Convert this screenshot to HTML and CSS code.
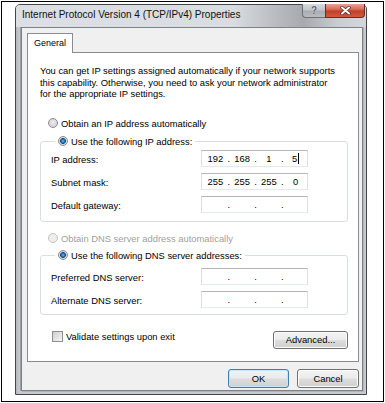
FILE: index.html
```html
<!DOCTYPE html>
<html>
<head>
<meta charset="utf-8">
<link rel="stylesheet" href="styles.css">
</head>
<body>
<div class="frame">
  <div class="window">
    <div class="titlebar">
      <span class="title">Internet Protocol Version 4 (TCP/IPv4) Properties</span>
      <div class="caption">
        <div class="cbtn help">?</div>
        <div class="cbtn close">
          <svg width="11" height="9" viewBox="0 0 11 9"><path d="M2 1.5 L9 7.5 M9 1.5 L2 7.5" stroke="#5a2a22" stroke-width="3.4" stroke-linecap="round"/><path d="M2 1.5 L9 7.5 M9 1.5 L2 7.5" stroke="#ffffff" stroke-width="2" stroke-linecap="round"/></svg>
        </div>
      </div>
    </div>
    <div class="client">
      <div class="tabs"><div class="tab">General</div></div>
      <div class="panel">
        <p class="intro">You can get IP settings assigned automatically if your network supports<br>this capability. Otherwise, you need to ask your network administrator<br>for the appropriate IP settings.</p>

        <div class="radio-row first"><span class="radio"></span><span class="rtext">Obtain an IP address automatically</span></div>

        <fieldset class="group g1">
          <legend><span class="leg"><span class="radio checked"></span><span class="rtext">Use the following IP address:</span></span></legend>
          <div class="field-row r1"><span class="lbl">IP address:</span>
            <div class="ip"><span class="oct">192</span><span class="dot">.</span><span class="oct">168</span><span class="dot">.</span><span class="oct">1</span><span class="dot">.</span><span class="oct">5<span class="caret"></span></span></div>
          </div>
          <div class="field-row"><span class="lbl">Subnet mask:</span>
            <div class="ip"><span class="oct">255</span><span class="dot">.</span><span class="oct">255</span><span class="dot">.</span><span class="oct">255</span><span class="dot">.</span><span class="oct">0</span></div>
          </div>
          <div class="field-row"><span class="lbl">Default gateway:</span>
            <div class="ip"><span class="oct"></span><span class="dot">.</span><span class="oct"></span><span class="dot">.</span><span class="oct"></span><span class="dot">.</span><span class="oct"></span></div>
          </div>
        </fieldset>

        <div class="radio-row dns-auto disabled"><span class="radio"></span><span class="rtext">Obtain DNS server address automatically</span></div>

        <fieldset class="group g2">
          <legend><span class="leg"><span class="radio checked"></span><span class="rtext">Use the following DNS server addresses:</span></span></legend>
          <div class="field-row r1"><span class="lbl">Preferred DNS server:</span>
            <div class="ip"><span class="oct"></span><span class="dot">.</span><span class="oct"></span><span class="dot">.</span><span class="oct"></span><span class="dot">.</span><span class="oct"></span></div>
          </div>
          <div class="field-row"><span class="lbl">Alternate DNS server:</span>
            <div class="ip"><span class="oct"></span><span class="dot">.</span><span class="oct"></span><span class="dot">.</span><span class="oct"></span><span class="dot">.</span><span class="oct"></span></div>
          </div>
        </fieldset>

        <div class="bottom-row">
          <div class="check-row"><span class="check"></span><span class="rtext">Validate settings upon exit</span></div>
          <div class="btn adv">Advanced...</div>
        </div>
      </div>
      <div class="dlg-btns">
        <div class="btn ok">OK</div>
        <div class="btn cancel">Cancel</div>
      </div>
    </div>
  </div>
</div>
</body>
</html>
```

FILE: styles.css
```css
* { box-sizing: border-box; }

body {
  margin: 0;
  background: #ffffff;
  font-family: "Liberation Sans", Arial, sans-serif;
  font-size: 9.4px;
  color: #000;
}

.frame {
  margin: 1px 0 0 1px;
  width: 383px;
  height: 401px;
  border: 1px solid #000;
  padding: 2px 0 0 13px;
}

.window {
  width: 352px;
  height: 391px;
  border: 1px solid #43474d;
  border-radius: 5px 5px 0 0;
  background: linear-gradient(90deg, #b3b7bc 0, #c6cace 3px, #c6cace 100%);
  display: flex;
  flex-direction: column;
}

.titlebar {
  height: 22px;
  flex: none;
  display: flex;
  align-items: flex-start;
  border-radius: 4px 4px 0 0;
  background: linear-gradient(90deg, #dcdfe3 0%, #d9dce0 62%, #b9bcc0 74%, #a6a9ad 82%, #c9ccd0 92%, #d4d7db 100%);
}

.title {
  font-size: 10px;
  line-height: 12px;
  margin: 4px 0 0 6px;
  color: #111;
  white-space: nowrap;
}

.caption {
  margin-left: auto;
  margin-right: 1px;
  margin-top: -1px;
  display: flex;
}

.cbtn {
  height: 14px;
  display: flex;
  align-items: center;
  justify-content: center;
}

.help {
  width: 23px;
  border: 1px solid #6c7177;
  border-top: none;
  border-right: none;
  border-radius: 0 0 0 4px;
  background: linear-gradient(#d7dadd 0%, #c2c6ca 45%, #a9adb2 55%, #b9bdc1 100%);
  color: #59626d;
  font-weight: bold;
  font-size: 10px;
  text-shadow: 0 0 1px #fff;
}

.close {
  width: 40px;
  border: 1px solid #6a2b22;
  border-top: none;
  border-radius: 0 0 4px 0;
  background: linear-gradient(#e7a497 0%, #d76d59 40%, #c43f2a 55%, #d0593f 100%);
}

.client {
  flex: 1;
  margin: 0 3px 3px 5px;
  border: 1px solid #7e8288;
  box-shadow: -1px 0 0 #9a9ea3, 1px 1px 0 #b0b3b7;
  background: #f0f0f0;
  padding: 5px 3px 2px 5px;
  display: flex;
  flex-direction: column;
}

.tabs {
  display: flex;
  height: 20px;
  margin-bottom: -1px;
  position: relative;
  z-index: 1;
}

.tab {
  width: 46px;
  border: 1px solid #898c95;
  border-bottom: none;
  background: #fff;
  padding-left: 6px;
  font-size: 9px;
  line-height: 18px;
}

.panel {
  height: 310px;
  flex: none;
  border: 1px solid #898c95;
  background: #fff;
  padding: 12px 10px 0 12px;
}

.intro {
  margin: 0;
  line-height: 11.5px;
  white-space: nowrap;
}

.radio-row {
  display: flex;
  align-items: center;
  height: 13px;
  margin-left: 8px;
}

.radio-row.first { margin-top: 17px; }
.radio-row.dns-auto { margin-top: 10px; }
.disabled { color: #a0a0a0; }

.radio {
  flex: none;
  width: 10px;
  height: 10px;
  border-radius: 50%;
  border: 1px solid #8b8d8f;
  background: radial-gradient(circle at 50% 45%, #eeeeee 0, #d6d6d6 60%, #e4e4e4 100%);
}

.radio.checked {
  background: radial-gradient(circle at 50% 50%, #6cc0f0 0, #2675b8 1.6px, #164f85 2.6px, #d8d8d8 3.2px, #ececec 100%);
}

.disabled .radio {
  border-color: #c4c4c4;
  background: #eeeeee;
}

.rtext {
  margin-left: 3px;
  white-space: nowrap;
}

.group {
  margin: 0;
  border: 1px solid #d5dfe5;
  border-radius: 3px;
  padding: 0 38px 8px 10px;
  min-width: 0;
}

.group.g1 { margin-top: 5px; }
.group.g2 { margin-top: 4px; padding-bottom: 6px; }

.group legend {
  margin-left: 4px;
  padding: 0 3px 0 3px;
}

.leg {
  display: flex;
  align-items: center;
  height: 13px;
}

.leg .rtext { margin-left: 3px; }

.field-row {
  display: flex;
  align-items: center;
  height: 17px;
  margin-top: 6px;
}

.g1 .field-row.r1 { margin-top: 2px; }
.g2 .field-row.r1 { margin-top: 6px; }

.lbl {
  width: 150px;
  flex: none;
  padding-top: 3px;
  white-space: nowrap;
}

.ip {
  width: 107px;
  height: 17px;
  flex: none;
  display: flex;
  align-items: center;
  padding-left: 2px;
  border: 1px solid;
  border-color: #b4b6bb #dbdfe6 #e3e9ef #dbdfe6;
  background: #fff;
  font-size: 9.4px;
}

.oct {
  width: 23px;
  text-align: center;
  white-space: nowrap;
}

.dot {
  width: 4px;
  text-align: center;
}

.caret {
  display: inline-block;
  width: 1px;
  height: 11px;
  background: #000;
  vertical-align: -2px;
  margin-left: 1px;
}

.bottom-row {
  display: flex;
  align-items: flex-start;
  justify-content: space-between;
  margin-top: 15px;
}

.check-row {
  display: flex;
  align-items: center;
  height: 13px;
  margin-left: 12px;
}

.check {
  flex: none;
  width: 11px;
  height: 11px;
  border: 1px solid #8e8f8f;
  background: linear-gradient(135deg, #cfcfcf 0%, #e6e6e6 60%, #f7f7f7 100%);
}

.btn {
  display: flex;
  align-items: center;
  justify-content: center;
  border: 1px solid #707070;
  border-radius: 3px;
  background: linear-gradient(#f3f3f3 0%, #ebebeb 48%, #dddddd 52%, #cfcfcf 100%);
  box-shadow: inset 0 0 0 1px #fcfcfc;
  white-space: nowrap;
}

.btn.adv {
  width: 75px;
  height: 18px;
  margin-top: 1px;
}

.dlg-btns {
  display: flex;
  justify-content: flex-end;
  gap: 8px;
  margin-top: 7px;
}

.btn.ok {
  width: 61px;
  height: 19px;
  border-color: #3c7fb1;
  box-shadow: inset 0 0 0 1px #c4e6f8;
  background: linear-gradient(#f2f2f2 0%, #ebebeb 48%, #dddddd 52%, #d0d0d0 100%);
}

.btn.cancel {
  width: 62px;
  height: 19px;
}
```
